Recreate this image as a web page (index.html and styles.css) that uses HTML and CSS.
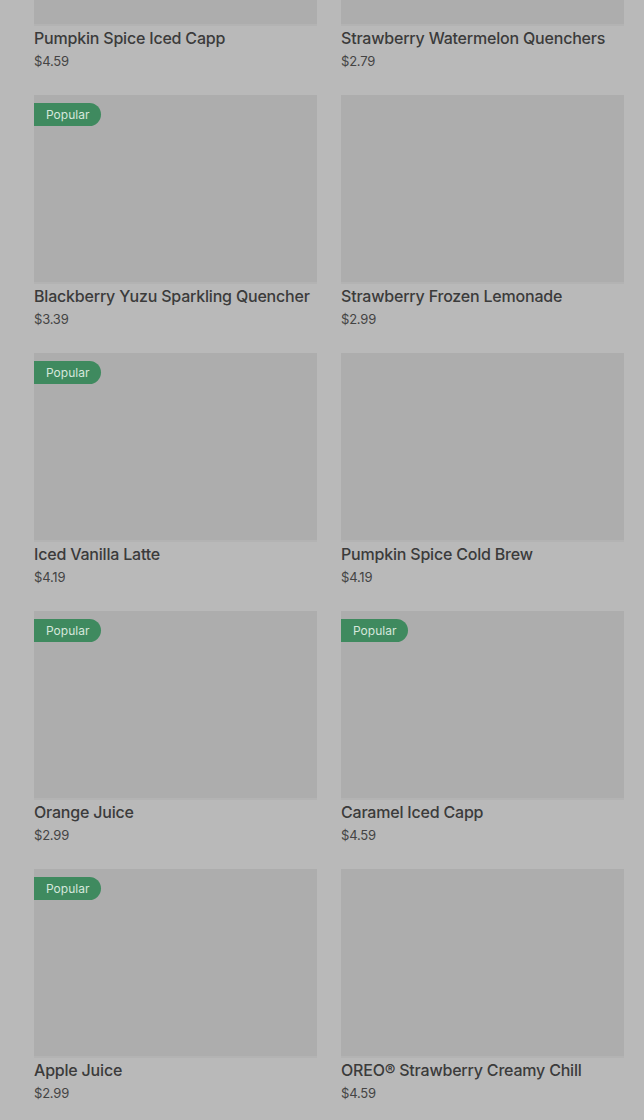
FILE: index.html
```html
<!DOCTYPE html>
<html lang="en">
<head>
  <meta charset="UTF-8" />
  <meta name="viewport" content="width=device-width, initial-scale=1.0"/>
  <title>Menu</title>
  <link rel="stylesheet" href="styles.css">
</head>
<body>
  <div class="menu">
    <div class="grid">
      <div class="item">
        <div class="thumb"></div>
        <div class="name">Pumpkin Spice Iced Capp</div>
        <div class="price">$4.59</div>
      </div>
      <div class="item">
        <div class="thumb"></div>
        <div class="name">Strawberry Watermelon Quenchers</div>
        <div class="price">$2.79</div>
      </div>

      <div class="item">
        <div class="thumb"><span class="badge">Popular</span></div>
        <div class="name">Blackberry Yuzu Sparkling Quencher</div>
        <div class="price">$3.39</div>
      </div>
      <div class="item">
        <div class="thumb"></div>
        <div class="name">Strawberry Frozen Lemonade</div>
        <div class="price">$2.99</div>
      </div>

      <div class="item">
        <div class="thumb"><span class="badge">Popular</span></div>
        <div class="name">Iced Vanilla Latte</div>
        <div class="price">$4.19</div>
      </div>
      <div class="item">
        <div class="thumb"></div>
        <div class="name">Pumpkin Spice Cold Brew</div>
        <div class="price">$4.19</div>
      </div>

      <div class="item">
        <div class="thumb"><span class="badge">Popular</span></div>
        <div class="name">Orange Juice</div>
        <div class="price">$2.99</div>
      </div>
      <div class="item">
        <div class="thumb"><span class="badge">Popular</span></div>
        <div class="name">Caramel Iced Capp</div>
        <div class="price">$4.59</div>
      </div>

      <div class="item">
        <div class="thumb"><span class="badge">Popular</span></div>
        <div class="name">Apple Juice</div>
        <div class="price">$2.99</div>
      </div>
      <div class="item">
        <div class="thumb"></div>
        <div class="name">OREO® Strawberry Creamy Chill</div>
        <div class="price">$4.59</div>
      </div>
    </div>
  </div>
</body>
</html>
```

FILE: styles.css
```css
:root {
  --bg: #b9b9b9;
  --thumb: #adadad;
  --text: #3b3b3b;
  --badge: #3f8a5f;
}

body {
  margin: 0;
  background-color: var(--bg);
  color: var(--text);
  font-family: Inter, 'Noto Sans', sans-serif;
  overflow: hidden;
}

.menu {
  padding: 0 20px 0 34px;
}

.grid {
  display: grid;
  grid-template-columns: 283px 283px;
  column-gap: 24px;
  row-gap: 25px;
  margin-top: -163px;
}

.item {
  display: flex;
  flex-direction: column;
}

.thumb {
  position: relative;
  height: 187px;
  background-color: var(--thumb);
  box-shadow: 0 2px 0 #b3b3b3;
}

.badge {
  position: absolute;
  top: 8px;
  left: 0;
  height: 23px;
  line-height: 23px;
  padding: 0 12px;
  border-radius: 0 12px 12px 0;
  background-color: var(--badge);
  color: #d6e7dc;
  font-size: 12px;
}

.name {
  margin-top: 4px;
  font-size: 16px;
  line-height: 20px;
  font-weight: 500;
  letter-spacing: -0.2px;
  white-space: nowrap;
}

.price {
  margin-top: 4px;
  font-size: 13px;
  line-height: 18px;
  letter-spacing: -0.2px;
  color: #444;
}
```
